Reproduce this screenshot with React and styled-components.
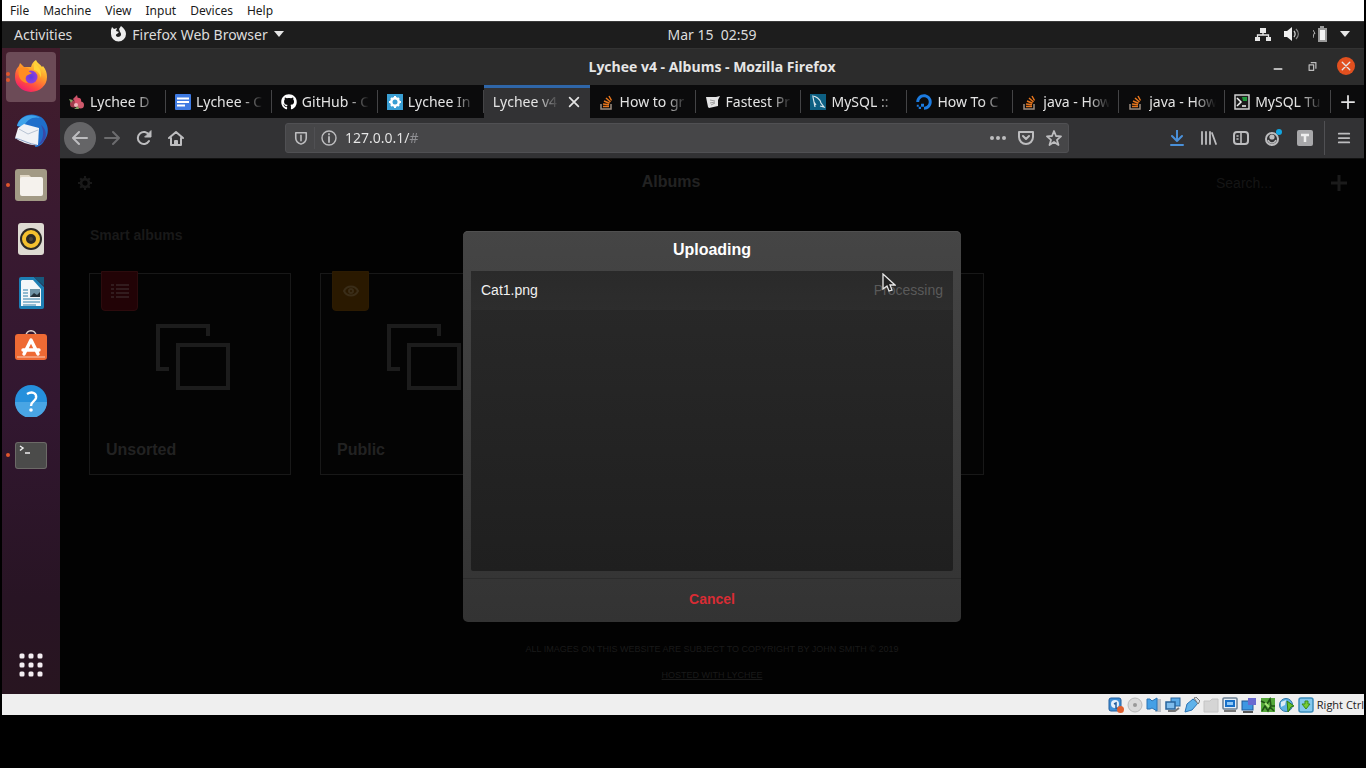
import React from "react";
import styled, { createGlobalStyle, css } from "styled-components";
import { FaGithub, FaDigitalOcean } from "react-icons/fa";

const ui = '"Noto Sans", "Open Sans", sans-serif';
const web = '"Liberation Sans", Arial, sans-serif';

const Global = createGlobalStyle`
  * { box-sizing: border-box; }
  body { margin: 0; background: #000; font-family: ${ui}; font-size: 14px; }
  button, input { font: inherit; color: inherit; border: 0; padding: 0; margin: 0; background: none; }
  a { color: inherit; text-decoration: none; }
  svg { display: block; flex: none; }
  h1, h2, p, ul { margin: 0; padding: 0; font-weight: inherit; font-size: inherit; }
  ul { list-style: none; }
`;

/* ---------- host window ---------- */

const HostWindow = styled.div`
  display: flex;
  flex-direction: column;
  min-height: 100vh;
  padding: 0 2px 53px;
`;

const MenuBar = styled.nav`
  display: flex;
  align-items: center;
  gap: 14px;
  height: 21px;
  padding-left: 8px;
  background: #fff;
  color: #1a1a1a;
  font-size: 12px;
`;

const StatusBar = styled.footer`
  display: flex;
  align-items: center;
  justify-content: flex-end;
  gap: 3px;
  height: 21px;
  background: #efefef;
  color: #222;
  white-space: nowrap;
`;

const HostKey = styled.span`
  font-family: "Open Sans", sans-serif;
  font-size: 11px;
`;

/* ---------- desktop ---------- */

const TopBar = styled.header`
  display: grid;
  grid-template-columns: 1fr auto 1fr;
  align-items: center;
  height: 27px;
  padding: 0 14px 2px 12px;
  border-top: 1px solid #3a3a3a;
  background: #1d1d1d;
  color: #dcdcdc;
`;

const TopGroup = styled.div`
  display: flex;
  align-items: center;
  gap: ${(p) => p.$gap}px;
  justify-content: ${(p) => (p.$end ? "flex-end" : "flex-start")};
`;

const AppMenu = styled.button`
  display: flex;
  align-items: center;
  gap: 6px;
`;

/* Centred over the area beside the dock. */
const Clock = styled.time`
  padding-left: 60px;
  white-space: pre;
`;

const Desktop = styled.div`
  display: flex;
  flex: 1;
`;

const Dock = styled.nav`
  display: flex;
  flex-direction: column;
  align-items: center;
  gap: 4px;
  width: 58px;
  padding: 4px 0;
  background: linear-gradient(#421d2c, #3a1a30 25%, #321730 55%, #281424 85%, #281520);
`;

const DockItem = styled.button`
  position: relative;
  display: grid;
  place-items: center;
  width: 50px;
  height: 50px;
  border-radius: 4px;
  background: ${(p) => (p.$active ? "#6c4b57" : "none")};
  &:last-child { margin-top: auto; }
`;

const RunningDots = styled.span`
  position: absolute;
  left: 0;
  top: 0;
  bottom: 0;
  display: flex;
  flex-direction: column;
  justify-content: center;
  gap: 2px;
  i { width: 4px; height: 4px; border-radius: 2px; background: #e0562c; }
`;

/* ---------- browser ---------- */

const Browser = styled.section`
  display: flex;
  flex-direction: column;
  flex: 1;
  min-width: 0;
`;

const TitleBar = styled.header`
  display: grid;
  grid-template-columns: 1fr auto 1fr;
  align-items: center;
  height: 37px;
  padding: 0 9px 2px 9px;
  background: #2c2c2c;
  border-top: 1px solid #333;
  color: #e6e6e6;
  h1 { grid-column: 2; font-family: "Open Sans", sans-serif; font-weight: 700; }
`;

const WindowButtons = styled.div`
  display: flex;
  justify-content: flex-end;
  gap: 16px;
`;

const WindowButton = styled.button`
  display: grid;
  place-items: center;
  width: 18px;
  height: 18px;
  border-radius: 9px;
  background: ${(p) => (p.$close ? "#e2501f" : "none")};
`;

const TabStrip = styled.div`
  display: flex;
  height: 33px;
  background: #0b0b0c;
  color: #e4e4e4;
`;

const Tab = styled.button`
  position: relative;
  display: flex;
  flex: 1;
  align-items: center;
  gap: 5px;
  min-width: 0;
  padding: 0 9px;
  &::after {
    content: "";
    position: absolute;
    right: 0;
    top: 5px;
    bottom: 5px;
    width: 1px;
    background: #444446;
  }
  ${(p) => p.$active && css`
    background: #323234;
    border-top: 3px solid #2f66a8;
    padding-bottom: 3px;
    gap: 8px;
    &::after { display: none; }
  `}
`;

const TabLabel = styled.span`
  flex: 1;
  min-width: 0;
  overflow: hidden;
  text-align: left;
  white-space: nowrap;
  mask-image: linear-gradient(to right, #000 68%, transparent 100%);
`;

const NewTab = styled.button`
  display: grid;
  place-items: center;
  width: 33px;
`;

const NavBar = styled.div`
  display: flex;
  align-items: center;
  height: 41px;
  padding: 0 4px 1px 4px;
  border-bottom: 1px solid #111;
  background: #323234;
  color: #bdbdbf;
`;

const NavButton = styled.button`
  display: grid;
  place-items: center;
  width: 32px;
  height: 32px;
  border-radius: 16px;
  color: ${(p) => (p.$dim ? "#6c6c6e" : "inherit")};
  background: ${(p) => (p.$filled ? "#656567" : "none")};
`;

const Divider = styled.span`
  width: 1px;
  height: ${(p) => p.$h}px;
  margin: 0 ${(p) => p.$m}px;
  background: #505053;
`;

const UrlBar = styled.div`
  display: flex;
  flex: 1;
  align-items: center;
  height: 30px;
  min-width: 0;
  margin: 0 92px 0 93px;
  padding: 0 0 0 6px;
  border: 1px solid #505053;
  border-radius: 3px;
  background: #464648;
`;

const UrlButton = styled.button`
  display: grid;
  place-items: center;
  width: ${(p) => p.$w}px;
  height: 28px;
`;

const UrlInput = styled.input`
  flex: 1;
  min-width: 0;
  margin-left: 7px;
  outline: 0;
  background: linear-gradient(to right, #e8e8e8 65px, #909094 65px);
  background-clip: text;
  -webkit-text-fill-color: transparent;
`;

/* ---------- web page ---------- */

const Page = styled.main`
  position: relative;
  display: flex;
  flex-direction: column;
  flex: 1;
  background: #020202;
  color: #222;
  font-family: ${web};
`;

const PageHeader = styled.header`
  display: flex;
  align-items: center;
  height: 48px;
  h1 {
    flex: 1;
    padding: 0 0 2px 16px;
    text-align: center;
    font-size: 16px;
    font-weight: 700;
  }
`;

const PageButton = styled.button`
  display: grid;
  place-items: center;
  width: 50px;
  height: 48px;
`;

const Search = styled.input`
  width: 98px;
  font-size: 14px;
  &::placeholder { color: #151515; opacity: 1; }
`;

const SectionTitle = styled.h2`
  padding: 19px 30px 0;
  line-height: 18px;
  font-weight: 700;
  color: #191919;
`;

const Albums = styled.ul`
  display: flex;
  gap: 29px;
  padding: 29px 29px 0;
`;

const Album = styled.li`
  position: relative;
  display: flex;
  flex-direction: column;
  align-items: center;
  justify-content: space-between;
  width: 202px;
  height: 202px;
  padding: 49px 0 15px;
  border: 1px solid #181818;
  background: #040404;
`;

const AlbumName = styled.p`
  align-self: stretch;
  padding-left: 16px;
  font-size: 16px;
  line-height: 18px;
  font-weight: 700;
`;

const Badge = styled.span`
  position: absolute;
  left: 11px;
  top: -3px;
  display: grid;
  place-items: center;
  width: 37px;
  height: 40px;
  border: 1px solid ${(p) => p.$edge};
  border-radius: 0 0 4px 4px;
  background: ${(p) => p.$bg};
`;

const PageFooter = styled.footer`
  margin-top: auto;
  padding-bottom: 10px;
  text-align: center;
  font-size: 9px;
  line-height: 18px;
  color: #1a1a1a;
  p + p { margin-top: 8px; }
  a { text-decoration: underline; }
`;

const Overlay = styled.div`
  position: absolute;
  inset: 0;
  display: flex;
  align-items: center;
  justify-content: center;
`;

const Dialog = styled.div`
  position: relative;
  width: 498px;
  border-radius: 5px;
  background: linear-gradient(#454545, #333);
  box-shadow: inset 0 1px 0 #505050;
  color: #f0f0f0;
  h2 {
    line-height: 38px;
    padding-bottom: 2px;
    text-align: center;
    font-size: 16px;
    font-weight: 700;
    color: #fff;
  }
`;

const FileList = styled.ul`
  height: 300px;
  margin: 0 8px 7px;
  border-radius: 2px;
  background: linear-gradient(#292929, #1f1f1f);
`;

const FileRow = styled.li`
  display: flex;
  justify-content: space-between;
  padding: 0 10px;
  line-height: 39px;
  background: linear-gradient(#2a2a2a, #2d2d2d);
`;

const FileState = styled.span`
  color: #5a5a5a;
`;

const CancelButton = styled.button`
  width: 100%;
  height: 44px;
  padding-bottom: 3px;
  border-top: 1px solid #2c2c2c;
  border-radius: 0 0 5px 5px;
  color: #d92c34;
  font-weight: 700;
`;

const Pointer = styled.svg`
  position: absolute;
  top: 42px;
  right: 65px;
`;

/* ---------- drawings ---------- */

const Line = ({ size = 16, w = 2, children, ...rest }) => (
  <svg width={size} height={size} viewBox="0 0 16 16" fill="none" stroke="currentColor" strokeWidth={w} strokeLinecap="round" strokeLinejoin="round" {...rest}>{children}</svg>
);

const Caret = () => <svg width="10" height="6" viewBox="0 0 10 6"><path d="M0 0h10L5 6z" fill="#e6e6e6" /></svg>;

const FirefoxMono = () => (
  <svg width="16" height="16" viewBox="0 0 16 16">
    <path d="M1 4l1-3 2 2 3-1-1 3 3 1-2 2c-2 0-1 3 1 3 3 0 4-3 2-5l-1-3 2-3c3 2 5 5 5 8a7.500 7.500 0 0 1-15 0z" fill="#ececec" />
  </svg>
);

const Firefox = () => (
  <svg width="34" height="34" viewBox="0 0 34 34">
    <defs>
      <linearGradient id="ffBody" x1=".85" y1=".05" x2=".3" y2="1">
        <stop offset="0" stopColor="#ffe843" /><stop offset=".4" stopColor="#ff9a2a" /><stop offset=".75" stopColor="#ff4a42" /><stop offset="1" stopColor="#ee1a72" />
      </linearGradient>
      <radialGradient id="ffGlobe"><stop offset="0" stopColor="#5b3be0" /><stop offset="1" stopColor="#9340d8" /></radialGradient>
    </defs>
    <path d="M1 17c0-5 1-8 4-11l1-3 4 4 7 0c1-4 3-6 5-7 1 3 4 4 6 7l1-1c3 4 4 7 4 11a16 15 0 0 1-32 0z" fill="url(#ffBody)" />
    <circle cx="17" cy="17" r="6.500" fill="url(#ffGlobe)" />
    <path d="M5 9c3-2 7-2 10 0-1 2 0 3 3 4-2 2-5 1-6 4-1 2 0 4 2 6-7 0-11-7-9-14z" fill="#ff8d22" />
    <path d="M20 3c5 3 8 8 7 15-1-4-3-7-7-8z" fill="#ffd338" />
  </svg>
);

const Thunderbird = () => (
  <svg width="36" height="34" viewBox="0 0 36 34">
    <path d="M4 12C6 2 18-3 28 3c8 6 9 17 3 24-2 4-6 6-9 6l3-14z" fill="#1f6fcb" />
    <path d="M4 12C6 2 19-2 27 4c-6-2-13 1-16 8z" fill="#3fa3ea" />
    <path d="M25 31c5-4 7-13 3-20 7 5 7 17-3 20z" fill="#3a49a8" />
    <path d="M5 14l6-4 15 4-1 17C17 32 8 28 2 24z" fill="#f0f2f6" />
    <path d="M6 15l9 5 10-4" fill="none" stroke="#b9c4d4" />
    <path d="M2 24c8 2 14 6 22 7" fill="none" stroke="#8ea4c8" />
  </svg>
);

const Files = () => (
  <svg width="32" height="32" viewBox="0 0 32 32">
    <rect width="32" height="32" rx="3" fill="#a29a85" />
    <path d="M5 6h9l2 2v3H5z" fill="#e1d8c6" />
    <rect x="5" y="8" width="23" height="19" rx="2" fill="#f5f2ed" />
  </svg>
);

const Rhythmbox = () => (
  <svg width="26" height="32" viewBox="0 0 26 32">
    <rect width="26" height="32" rx="3" fill="#dedad2" />
    <circle cx="13" cy="16" r="11" fill="#2b2926" />
    <circle cx="13" cy="16" r="7" fill="none" stroke="#f4c02e" strokeWidth="4" />
    <circle cx="13" cy="16" r="2" fill="#4a443a" />
  </svg>
);

const Writer = () => (
  <svg width="26" height="32" viewBox="0 0 26 32">
    <path d="M3 0h13l10 10v20a2 2 0 0 1-2 2H3a2 2 0 0 1-2-2V2a2 2 0 0 1 2-2z" fill="#1d7fb4" />
    <path d="M4 3h11l8 9v17H3V4z" fill="#f4f7f9" />
    <path d="M16 0h10v9z" fill="#17587c" />
    <path d="M5 13h5M5 16h5M5 19h5M5 22h17M5 25h17M5 28h13" stroke="#2c7fa9" strokeWidth="1" />
    <rect x="12" y="12" width="10" height="8" fill="#6e93a5" />
    <path d="M12 20l4-4 3 2 3-3v5z" fill="#23323a" />
  </svg>
);

const Software = () => (
  <svg width="32" height="34" viewBox="0 0 32 34">
    <path d="M11 6c0-7 10-7 10 0" fill="none" stroke="#e0d4ce" strokeWidth="1.500" />
    <rect y="4" width="32" height="26" rx="3" fill="#ee6a34" />
    <path d="M2 27h28" stroke="#f49a74" strokeWidth="2" />
    <path d="M9 24l7-14 7 14M8 20h16" fill="none" stroke="#fff" strokeWidth="3.400" strokeLinecap="round" strokeLinejoin="round" />
  </svg>
);

const Help = () => (
  <svg width="32" height="32" viewBox="0 0 32 32">
    <circle cx="16" cy="16" r="16" fill="#2590dc" />
    <path d="M0 17h32a16 16 0 0 1-32 0z" fill="#49a5e4" />
    <path d="M12 9c5-3 10-1 9 4-1 4-5 3-5 8" fill="none" stroke="#fff" strokeWidth="2.400" />
    <circle cx="16" cy="25" r="1.800" fill="#fff" />
  </svg>
);

const Terminal = () => (
  <svg width="32" height="27" viewBox="0 0 32 27">
    <rect width="32" height="27" rx="3" fill="#6c6a67" />
    <rect x="1" y="1" width="30" height="25" rx="2" fill="#4b4b4a" />
    <path d="M5 4l3 2-3 2.500M10 11h5" fill="none" stroke="#f0f0f0" strokeWidth="1.500" />
  </svg>
);

const AppsGrid = () => (
  <svg width="24" height="24" viewBox="0 0 24 24" fill="#f4eef2">
    {[3, 12, 21].flatMap((y) => [3, 12, 21].map((x) => <rect key={`${x}-${y}`} x={x - 2.5} y={y - 2.5} width="5" height="5" rx="1.500" />))}
  </svg>
);

const Lychee = () => (
  <svg width="16" height="16" viewBox="0 0 16 16">
    <path d="M8 1l1 4-3 3-2-3z" fill="#c9566a" />
    <circle cx="4.500" cy="10" r="3.500" fill="#a03c4c" /><circle cx="9" cy="7" r="3.200" fill="#d9506a" />
    <circle cx="11.500" cy="11" r="3.500" fill="#ce5a6c" /><path d="M0 5l4 1-2 3zM5 15l4-3 1 3z" fill="#7fa060" />
    <circle cx="7" cy="11" r="2" fill="#f0b6bd" />
  </svg>
);
const Docs = () => (
  <svg width="16" height="16" viewBox="0 0 16 16"><rect width="16" height="16" rx="1" fill="#3e7ae2" /><path d="M2 4.500h12M2 8h12M2 11.500h8" stroke="#fff" strokeWidth="1.800" /></svg>
);
const GearTile = () => (
  <svg width="16" height="16" viewBox="0 0 16 16"><rect width="16" height="16" fill="#3a9fd4" /><circle cx="8" cy="8" r="3.700" fill="none" stroke="#fff" strokeWidth="2.600" /><path d="M8 2v12M2 8h12M4 4l8 8M12 4l-8 8" stroke="#fff" strokeWidth="2" /><circle cx="8" cy="8" r="2.500" fill="#3a9fd4" /></svg>
);
const Stack = () => (
  <svg width="16" height="16" viewBox="0 0 16 16" fill="none">
    <path d="M2 10v5h10v-5" stroke="#9c8d80" strokeWidth="1.500" />
    <path d="M4 12.500h6M4 10l6 .8M5 7l5.500 2.300M7 4l4.500 4M10 2l2.500 4.500" stroke="#e8761c" strokeWidth="1.500" />
  </svg>
);
const Script = () => (
  <svg width="16" height="16" viewBox="0 0 16 16"><path d="M1 3l4 0 6 0 4-1-2 4v6l-9 2-1-1z" fill="#e4e4e4" /><path d="M5 6l5 1M5 9l5-1M6 11l4-2" stroke="#a0a0a0" /></svg>
);
const MySql = () => (
  <svg width="16" height="16" viewBox="0 0 16 16"><rect width="16" height="16" fill="#0d5f82" /><path d="M2 2c4 0 8 3 9 7l3 4-4-1M3 3l1 5 1 5M4 8l2 3" fill="none" stroke="#d8e6ec" strokeWidth="1.200" /></svg>
);
const Prompt = () => (
  <svg width="16" height="16" viewBox="0 0 16 16"><rect x="1" y="1" width="14" height="14" fill="#1c1c1c" stroke="#d0d0d0" strokeWidth="1.500" /><path d="M3 4l4 4-4 4M8 12h4" fill="none" stroke="#f2f2f2" strokeWidth="1.500" /><path d="M8 3h5v4H9z" fill="#1f9a3c" /></svg>
);

const Network = () => (
  <svg width="16" height="15" viewBox="0 0 16 15"><path d="M5 1h6v5H5zM0 10h5v4H0zM11 10h5v4h-5z" fill="#e8e8e8" /><path d="M8 5v3M2.500 10V8h11v2" fill="none" stroke="#e8e8e8" strokeWidth="1.300" /></svg>
);
const Volume = () => (
  <svg width="16" height="14" viewBox="0 0 16 14"><path d="M0 4h3l5-4v14l-5-4H0z" fill="#f0f0f0" /><path d="M10 4c1.500 2 1.500 4 0 6" fill="none" stroke="#ccc" strokeWidth="1.300" /><path d="M12 2c3 3 3 7 0 10" fill="none" stroke="#888" strokeWidth="1.300" /></svg>
);
const Battery = () => (
  <svg width="14" height="16" viewBox="0 0 14 16"><path d="M0 4l2 3.500H1L0 12" fill="none" stroke="#b0b0b0" /><path d="M5 2h2V0h4v2h3v14H5z" fill="#9a9a9a" /><path d="M7 4h5v10H7z" fill="#f4f4f4" /></svg>
);

const CogShape = () => (
  <svg width="14" height="14" viewBox="0 0 16 16" fill="none" stroke="#191919">
    <circle cx="8" cy="8" r="4.500" strokeWidth="3" />
    <path d="M8 0v3M8 13v3M0 8h3M13 8h3M2.500 2.500l2 2M11.500 11.500l2 2M13.500 2.500l-2 2M4.500 11.500l-2 2" strokeWidth="2.500" />
  </svg>
);

const Frames = () => (
  <svg width="80" height="68" viewBox="0 0 80 68" fill="none" stroke="#1c1c1c" strokeWidth="4">
    <path d="M58 13V3H8v43h11" /><rect x="28" y="22" width="50" height="43" />
  </svg>
);

const ListGlyph = () => (
  <svg width="18" height="16" viewBox="0 0 18 16" stroke="#321c1e" strokeWidth="2"><path d="M0 2h3M5 2h13M0 6h3M5 6h13M0 10h3M5 10h13M0 14h3M5 14h13" /></svg>
);
const EyeGlyph = () => (
  <svg width="16" height="12" viewBox="0 0 16 12" fill="none" stroke="#3a2d18" strokeWidth="2"><path d="M1 6c3-6 11-6 14 0-3 6-11 6-14 0z" /><circle cx="8" cy="6" r="2" /></svg>
);

/* Status bar indicators share one 16px canvas. */
const deviceIcons = [
  ["Hard disks", <><rect x="1" y="1" width="12" height="13" rx="2" fill="#3f8fd6" stroke="#225e9e" /><circle cx="7" cy="7" r="4" fill="#e6f1fb" /><path d="M6 7l2-1v5l4 2" fill="none" stroke="#225e9e" strokeWidth="1.500" /><circle cx="12.500" cy="12.500" r="3.500" fill="#e0602f" /></>],
  ["Optical drives", <><circle cx="8" cy="8" r="7" fill="#dadada" stroke="#b9b9b9" /><circle cx="8" cy="8" r="2" fill="#999" /></>],
  ["Audio", <><path d="M9 2h6v13H9z" fill="#b8bdc4" /><path d="M1 2h3l2 2 5-3v13l-5-3-2 1H1z" fill="#45a0e6" stroke="#2a73b4" /></>],
  ["Network", <><rect x="6" y="1" width="9" height="8" fill="#5aa9e6" stroke="#28649c" /><rect x="1" y="5" width="9" height="7" fill="#7fbcec" stroke="#28649c" strokeWidth="1.500" /><path d="M3 14h7l4-3" fill="none" stroke="#777" strokeWidth="2" /></>],
  ["USB", <><path d="M1 15l2-8 6-5 5 4-6 7z" fill="#5fb2ea" stroke="#2a73b4" /><path d="M10 1l2-1 4 4-2 3z" fill="#d9e2ea" stroke="#777" /></>],
  ["Shared folders", <path d="M1 15V4h6l2-2h6v13z" fill="#d5d5d5" stroke="#c4c4c4" />],
  ["Display", <><rect x="1" y="1" width="14" height="11" rx="1" fill="#e4eef7" stroke="#6a7f92" strokeWidth="1.500" /><rect x="4" y="4" width="8" height="5" fill="#8ec8f8" stroke="#1770c8" strokeWidth="2" /><path d="M2 14h12" stroke="#777" strokeWidth="2" /></>],
  ["Recording", <><rect x="1" y="4" width="11" height="9" fill="#3e97e2" stroke="#1f5896" /><rect x="7" y="1" width="8" height="7" fill="#6a6ad0" /><path d="M2 15h10" stroke="#555" strokeWidth="2" /></>],
  ["Processor", <><rect x="1" y="1" width="14" height="14" fill="#55a83a" /><path d="M1 4l6 3 3-5 1 7 4 0M2 14l3-5 3 5 2-4 4 4" fill="none" stroke="#1f5214" strokeWidth="1.500" /><path d="M5 6l4 4" stroke="#a8e478" strokeWidth="2" /></>],
  ["Mouse integration", <><circle cx="7" cy="8" r="6.500" fill="#5fb2e6" stroke="#2a73a4" /><path d="M2 5l5-2-1 5-4 2z" fill="#dcebf4" /><path d="M8 4l7 5-3 1-3 5z" fill="#67c22e" stroke="#2f7a14" /></>],
  ["Keyboard", <><rect x="1" y="1" width="14" height="14" rx="2" fill="#84c8ee" stroke="#3a8cba" strokeWidth="1.500" /><path d="M7 4h3v3h2l-4 5-4-5h3z" fill="#76cc34" stroke="#3b8a1c" /></>],
];

const dockItems = [
  { name: "Firefox", icon: <Firefox />, active: true, windows: 2 },
  { name: "Thunderbird", icon: <Thunderbird /> },
  { name: "Files", icon: <Files />, windows: 1 },
  { name: "Rhythmbox", icon: <Rhythmbox /> },
  { name: "Writer", icon: <Writer /> },
  { name: "Software", icon: <Software /> },
  { name: "Help", icon: <Help /> },
  { name: "Terminal", icon: <Terminal />, windows: 1 },
  { name: "Applications", icon: <AppsGrid /> },
];

const tabs = [
  { label: "Lychee D", icon: <Lychee /> },
  { label: "Lychee - C", icon: <Docs /> },
  { label: "GitHub - C", icon: <FaGithub size={16} color="#fff" /> },
  { label: "Lychee In", icon: <GearTile /> },
  { label: "Lychee v4", active: true },
  { label: "How to gr", icon: <Stack /> },
  { label: "Fastest Pr", icon: <Script /> },
  { label: "MySQL ::", icon: <MySql /> },
  { label: "How To C", icon: <FaDigitalOcean size={16} color="#1c7be0" /> },
  { label: "java - How", icon: <Stack /> },
  { label: "java - How", icon: <Stack /> },
  { label: "MySQL Tu", icon: <Prompt /> },
];

const albums = [
  { id: 1, name: "Unsorted", badge: <Badge $bg="#220306" $edge="#2c0b0d"><ListGlyph /></Badge> },
  { id: 2, name: "Public", badge: <Badge $bg="#2a1900" $edge="#2c1b02"><EyeGlyph /></Badge> },
  { id: 3 },
  { id: 4 },
];

export default function App() {
  return (
    <HostWindow>
      <Global />
      <MenuBar>
        {["File", "Machine", "View", "Input", "Devices", "Help"].map((m) => <button key={m}>{m}</button>)}
      </MenuBar>

      <TopBar>
        <TopGroup $gap={38}>
          <button>Activities</button>
          <AppMenu><FirefoxMono />Firefox Web Browser<Caret /></AppMenu>
        </TopGroup>
        <Clock>Mar 15  02:59</Clock>
        <TopGroup $gap={13} $end><Network /><Volume /><Battery /><Caret /></TopGroup>
      </TopBar>

      <Desktop>
        <Dock>
          {dockItems.map((d) => (
            <DockItem key={d.name} aria-label={d.name} $active={d.active}>
              {d.windows && <RunningDots>{Array.from({ length: d.windows }, (_, i) => <i key={i} />)}</RunningDots>}
              {d.icon}
            </DockItem>
          ))}
        </Dock>

        <Browser>
          <TitleBar>
            <h1>Lychee v4 - Albums - Mozilla Firefox</h1>
            <WindowButtons>
              <WindowButton aria-label="Minimize"><Line size={12} w={2}><path d="M3 12h10" /></Line></WindowButton>
              <WindowButton aria-label="Restore"><Line size={9} w={2.2} color="#bbb"><path d="M2 5h8v10H2zM6 1h8v10" strokeLinecap="square" /></Line></WindowButton>
              <WindowButton $close aria-label="Close"><Line size={12} w={1.8}><path d="M3 3l10 10M13 3L3 13" /></Line></WindowButton>
            </WindowButtons>
          </TitleBar>

          <TabStrip>
            {tabs.map((t, i) => (
              <Tab key={i} $active={t.active}>
                {t.icon}
                <TabLabel>{t.label}</TabLabel>
                {t.active && <Line size={14} w={2}><path d="M3 3l10 10M13 3L3 13" /></Line>}
              </Tab>
            ))}
            <NewTab aria-label="New tab"><Line size={14}><path d="M8 1v14M1 8h14" /></Line></NewTab>
          </TabStrip>

          <NavBar>
            <NavButton $filled aria-label="Back"><Line><path d="M15 8H1M7 2L1 8l6 6" /></Line></NavButton>
            <NavButton $dim aria-label="Forward"><Line><path d="M1 8h14M9 2l6 6-6 6" /></Line></NavButton>
            <NavButton aria-label="Reload"><Line><path d="M13 11a6 6 0 1 1 0-6" /><path d="M15 1v6H9z" fill="currentColor" strokeWidth="1" /></Line></NavButton>
            <NavButton aria-label="Home"><Line><path d="M1 8l7-6 7 6M3 8v7h10V8M7 15v-4h2v4" /></Line></NavButton>
            <UrlBar>
              <UrlButton $w={17} aria-label="Protection"><Line size={14} w={1.8}><path d="M2 2h12v6c0 4-3 6-6 7-3-1-6-3-6-7z" /><path d="M8 5v6" /></Line></UrlButton>
              <Divider $h={22} $m={5} />
              <UrlButton $w={18} aria-label="Site information"><Line w={1.4}><circle cx="8" cy="8" r="7" /><path d="M8 7v5M8 4v.5" strokeWidth="1.800" /></Line></UrlButton>
              <UrlInput aria-label="Address" defaultValue="127.0.0.1/#" />
              <UrlButton $w={28} aria-label="Page actions"><svg width="16" height="4" fill="currentColor"><circle cx="2" cy="2" r="2" /><circle cx="8" cy="2" r="2" /><circle cx="14" cy="2" r="2" /></svg></UrlButton>
              <UrlButton $w={28} aria-label="Pocket"><Line><path d="M1 2h14v5a7 7 0 0 1-14 0zM5 6l3 3 3-3" /></Line></UrlButton>
              <UrlButton $w={28} aria-label="Bookmark"><Line w={1.8}><path d="M8 1l2 5 5 .4-4 3.500L12.500 15 8 12l-4.500 3L5 9.900 1 6.400 6 6z" /></Line></UrlButton>
            </UrlBar>
            <NavButton aria-label="Downloads"><Line color="#4a90d9"><path d="M8 0v11M3 6l5 5 5-5M2 15h12" /></Line></NavButton>
            <NavButton aria-label="Library"><Line><path d="M1 2v12M5 2v12M9 2v12M11 3l4 11" strokeWidth="1.800" /></Line></NavButton>
            <NavButton aria-label="Sidebar"><Line><rect x="1" y="2" width="14" height="12" rx="3" /><path d="M8 2v12M4 6h1M4 9h1" strokeWidth="1.600" /></Line></NavButton>
            <NavButton aria-label="Account">
              <svg width="18" height="18" viewBox="0 0 18 18"><circle cx="8" cy="10" r="6" fill="none" stroke="currentColor" strokeWidth="2" /><circle cx="8" cy="8" r="2.600" fill="currentColor" /><path d="M4 11c2 4 6 4 8 0" fill="none" stroke="currentColor" strokeWidth="1.500" /><circle cx="15" cy="3" r="3" fill="#12a5e0" /></svg>
            </NavButton>
            <NavButton aria-label="Extension">
              <svg width="16" height="16"><rect width="16" height="16" rx="2" fill="#a8a8aa" /><path d="M4 5h8M8 5v7" stroke="#eee" strokeWidth="2.500" /></svg>
            </NavButton>
            <Divider $h={34} $m={3} />
            <NavButton aria-label="Menu"><Line size={14}><path d="M2 3h12M2 8h12M2 13h12" /></Line></NavButton>
          </NavBar>

          <Page>
            <PageHeader>
              <PageButton aria-label="Settings"><CogShape /></PageButton>
              <h1>Albums</h1>
              <Search type="search" aria-label="Search albums" placeholder="Search..." />
              <PageButton aria-label="Add"><Line w={3} color="#1b1b1b" strokeLinecap="butt"><path d="M8 0v16M0 8h16" /></Line></PageButton>
            </PageHeader>
            <SectionTitle>Smart albums</SectionTitle>
            <Albums>
              {albums.map((a) => (
                <Album key={a.id}>
                  {a.badge}
                  <Frames />
                  {a.name && <AlbumName>{a.name}</AlbumName>}
                </Album>
              ))}
            </Albums>
            <PageFooter>
              <p>ALL IMAGES ON THIS WEBSITE ARE SUBJECT TO COPYRIGHT BY JOHN SMITH © 2019</p>
              <p><a href="#lychee">HOSTED WITH LYCHEE</a></p>
            </PageFooter>

            <Overlay>
              <Dialog role="dialog" aria-labelledby="upload-title">
                <h2 id="upload-title">Uploading</h2>
                <FileList>
                  <FileRow><span>Cat1.png</span><FileState>Processing</FileState></FileRow>
                </FileList>
                <CancelButton>Cancel</CancelButton>
                <Pointer width="14" height="20" viewBox="0 0 14 20">
                  <path d="M1 1v15l4-3 2 5 3-1-2-5h5z" fill="#222" stroke="#e8e8e8" strokeWidth="1.300" />
                </Pointer>
              </Dialog>
            </Overlay>
          </Page>
        </Browser>
      </Desktop>

      <StatusBar>
        {deviceIcons.map(([name, art]) => (
          <svg key={name} role="img" aria-label={name} width="16" height="16" viewBox="0 0 16 16">{art}</svg>
        ))}
        <HostKey>Right Ctrl</HostKey>
      </StatusBar>
    </HostWindow>
  );
}
